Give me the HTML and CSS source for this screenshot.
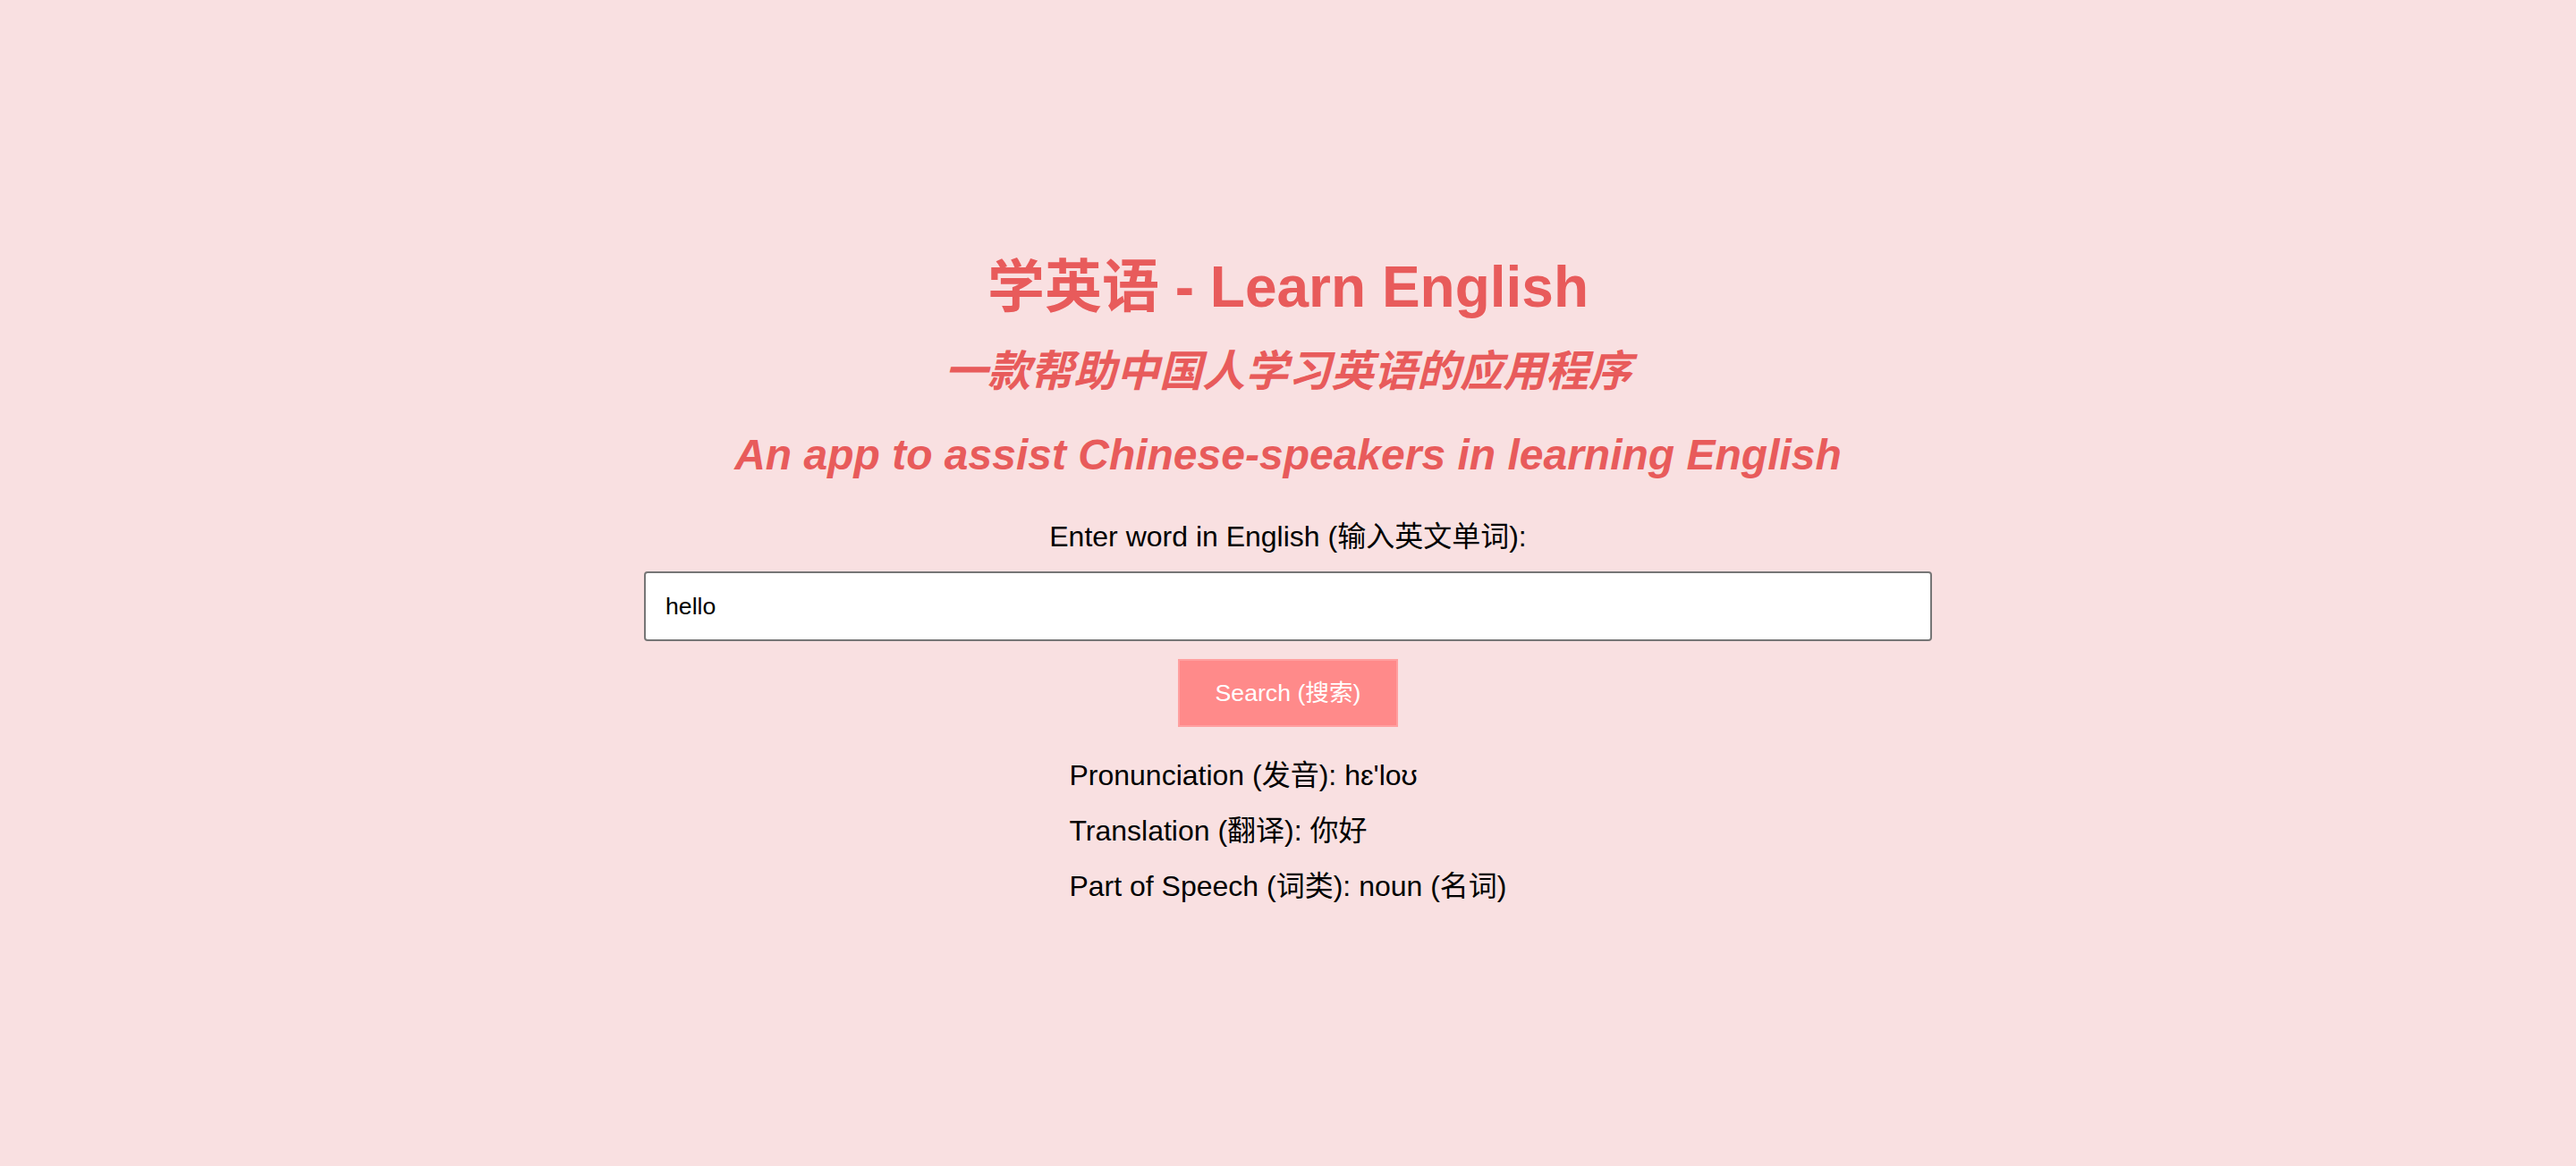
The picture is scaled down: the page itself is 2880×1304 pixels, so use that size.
FILE: index.html
```html
<!DOCTYPE html>
<html lang="zh">
<head>
<meta charset="utf-8">
<title>学英语 - Learn English</title>
<link rel="stylesheet" href="styles.css">
</head>
<body>
<main class="app">
  <h1 class="title">学英语 - Learn English</h1>
  <h2 class="subtitle subtitle-cn">一款帮助中国人学习英语的应用程序</h2>
  <h2 class="subtitle subtitle-en">An app to assist Chinese-speakers in learning English</h2>
  <label class="label" for="word">Enter word in English (输入英文单词):</label>
  <input class="word-input" id="word" type="text" value="hello">
  <button class="search-btn" type="button">Search (搜索)</button>
  <div class="results">
    <p class="result">Pronunciation (发音): hɛ'loʊ</p>
    <p class="result">Translation (翻译): 你好</p>
    <p class="result">Part of Speech (词类): noun (名词)</p>
  </div>
</main>
</body>
</html>
```

FILE: styles.css
```css
html, body {
  margin: 0;
  padding: 0;
}

body {
  background: #f9e0e1;
  font-family: "Liberation Sans", Arial, "Noto Sans CJK SC", sans-serif;
  color: #000;
  min-height: 1304px;
}

.app {
  display: flex;
  flex-direction: column;
  align-items: center;
  padding-top: 284px;
}

.title {
  margin: 0;
  font-size: 64px;
  line-height: 74px;
  font-weight: bold;
  color: #e85b5b;
}

.subtitle {
  margin: 0;
  font-size: 48px;
  line-height: 56px;
  font-weight: bold;
  font-style: italic;
  color: #e85b5b;
}

.subtitle-cn {
  margin-top: 30px;
}

.subtitle-en {
  margin-top: 37px;
}

.label {
  margin-top: 45px;
  font-size: 32px;
  line-height: 37px;
}

.word-input {
  margin-top: 20px;
  box-sizing: border-box;
  width: 1440px;
  height: 78px;
  padding: 0 22px;
  border: 2px solid #767676;
  border-radius: 4px;
  background: #fff;
  font-family: "Liberation Sans", Arial, "Noto Sans CJK SC", sans-serif;
  font-size: 26.67px;
  color: #000;
  outline: none;
}

.search-btn {
  margin-top: 20px;
  box-sizing: border-box;
  height: 76px;
  padding: 0 40px;
  border: 2px solid #ffa0a0;
  background: #ff8a8a;
  color: #fff;
  font-family: "Liberation Sans", Arial, "Noto Sans CJK SC", sans-serif;
  font-size: 26.67px;
  line-height: 30px;
}

.results {
  margin-top: 23px;
  align-self: center;
}

.result {
  margin: 0;
  font-size: 32px;
  line-height: 62px;
}
```
